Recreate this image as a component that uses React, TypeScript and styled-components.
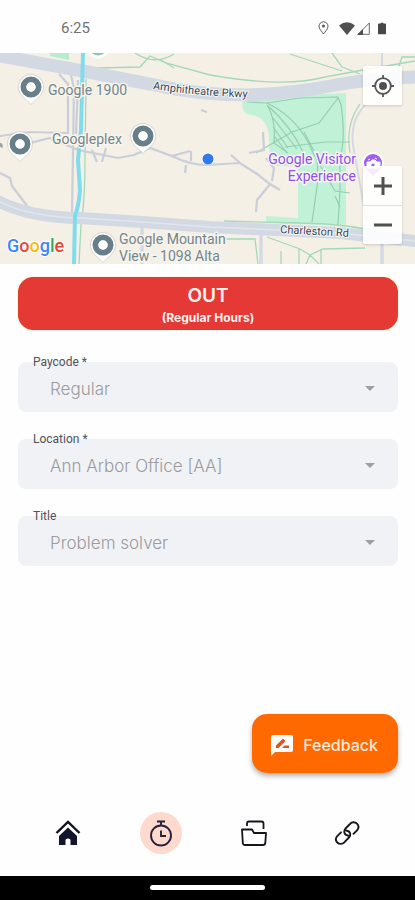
import React from "react";
import styled, { createGlobalStyle } from "styled-components";

const GlobalStyle = createGlobalStyle`
  * { box-sizing: border-box; }
  body { margin: 0; background: #fefefe; font-family: Inter, Roboto, sans-serif; }
  button, select { font: inherit; border: 0; }
  button { cursor: pointer; }
`;

const Screen = styled.div`
  display: flex;
  flex-direction: column;
  min-height: 100vh;
`;

const StatusBar = styled.header`
  display: flex;
  align-items: center;
  justify-content: space-between;
  height: 53px;
  padding: 3px 29px 0 61px;
  font: 400 15px/20px Roboto, sans-serif;
  color: #727272;
`;

const StatusIcons = styled.div`
  display: flex;
  align-items: center;
`;

const StatusIcon = styled.svg<{ $gap: number }>`
  display: block;
  margin-left: ${(p) => p.$gap}px;
`;

const MapPanel = styled.section`
  position: relative;
  height: 211px;
  overflow: hidden;
`;

const MapDrawing = styled.svg`
  display: block;
  width: 100%;
  height: 100%;
  text { font-family: Roboto, sans-serif; }
`;

const MapControls = styled.div`
  position: absolute;
  inset: 0;
  display: flex;
  flex-direction: column;
  align-items: flex-end;
  justify-content: space-between;
  padding: 13px 13px 20px;
  pointer-events: none;
`;

const ControlGroup = styled.div`
  display: flex;
  flex-direction: column;
  background: rgba(255, 255, 255, 0.88);
  box-shadow: 0 1px 3px rgba(0, 0, 0, 0.16);
  border-radius: 2px;
  pointer-events: auto;
`;

const MapButton = styled.button`
  display: grid;
  place-items: center;
  width: 39px;
  height: 39px;
  padding: 0;
  background: transparent;
  & + & { border-top: 1px solid #dedede; }
`;

const Main = styled.main`
  display: flex;
  flex: 1;
  flex-direction: column;
  padding: 13px 17px 39px 18px;
`;

const PunchButton = styled.button`
  display: flex;
  flex-direction: column;
  align-items: center;
  justify-content: center;
  height: 53px;
  padding: 2px 0 0;
  border: 1px solid #e2401c;
  border-radius: 15px;
  background: #e53935;
  color: #fff2f0;
  box-shadow: 0 0 1px #f5a05c;
`;

const PunchTitle = styled.span`
  font-size: 19px;
  line-height: 26px;
  font-weight: 600;
`;

const PunchNote = styled.span`
  font-size: 12px;
  line-height: 18px;
  font-weight: 700;
`;

const Form = styled.form`
  display: flex;
  flex-direction: column;
  gap: 27px;
  margin-top: 32px;
`;

const Field = styled.div`
  position: relative;
  display: flex;
`;

const FieldLabel = styled.label`
  position: absolute;
  top: -8px;
  left: 15px;
  font: 400 12px/16px Roboto, sans-serif;
  color: #505256;
`;

const FieldSelect = styled.select`
  flex: 1;
  min-width: 0;
  height: 50px;
  padding: 3px 48px 0 32px;
  border-radius: 8px;
  background: #f0f2f5;
  color: #9b9b9d;
  font-size: 17px;
  font-weight: 300;
  appearance: none;
`;

const Caret = styled.svg`
  position: absolute;
  top: 24px;
  right: 23px;
  pointer-events: none;
`;

const FeedbackButton = styled.button`
  display: flex;
  align-items: center;
  align-self: flex-end;
  gap: 9px;
  height: 59px;
  margin-top: auto;
  padding: 2px 20px 0 18px;
  border-radius: 15px;
  background: #ff6900;
  color: #ffeadc;
  font-size: 16px;
  font-weight: 500;
  box-shadow: 0 3px 5px rgba(0, 0, 0, 0.3);
`;

const NavBar = styled.nav`
  display: flex;
  padding: 0 21px 22px;
`;

const NavItem = styled.a`
  display: flex;
  flex: 1;
  justify-content: center;
`;

const NavIcon = styled.span<{ $active?: boolean }>`
  display: grid;
  place-items: center;
  width: 42px;
  height: 42px;
  border-radius: 50%;
  background: ${(p) => (p.$active ? "#fdd9ce" : "transparent")};
`;

const GestureBar = styled.footer`
  display: flex;
  justify-content: center;
  height: 24px;
  padding-top: 9px;
  background: #000;
`;

const GestureHandle = styled.span`
  width: 115px;
  height: 5px;
  border-radius: 3px;
  background: #fff;
`;

const PlacePin = ({ x, y }: { x: number; y: number }) => (
  <g transform={`translate(${x} ${y})`}>
    <path d="M0 18 C-4 13 -13 9 -13 0 A13 13 0 0 1 13 0 C13 9 4 13 0 18Z" fill="#b9bec0" opacity=".5" />
    <path d="M0 17 C-3 13 -12 9 -12 0 A12 12 0 0 1 12 0 C12 9 3 13 0 17Z" fill="#fff" />
    <circle r="7.5" fill="none" stroke="#687f8a" strokeWidth="6" />
    <circle r="4.7" fill="#fff" />
  </g>
);

const CampusMap = () => (
  <MapDrawing viewBox="0 53 415 211" preserveAspectRatio="xMidYMid slice" role="img" aria-label="Map of the area around Googleplex">
    <rect x="-400" y="53" width="1200" height="211" fill="#f5f0e5" />
    <path d="M50 53h19v7l-19-4z" fill="#b8ecd0" />
    <path d="M243 98 L346 93 V226 L266 223 V216 L298 218 V166 H270 L269 137 C268 122 260 115 250 115 C242 113 241 104 243 98Z" fill="#c1f1d6" />

    <g fill="none" stroke="#a3d8bb" strokeWidth="1.3">
      <path d="M86 79 L85 160 Q85 200 81 225 L79 264" />
      <path d="M93 79 L98 68 L140 67 L150 56 L166 63 L210 75 Q285 88 325 77 L363 70 L415 61" />
      <path d="M135 53 Q155 66 174 54 M161 60 L174 68 M332 53 L342 67 L360 74 M290 54 L342 71 M398 69 L402 57 H415" />
      <path d="M224 221 L300 223 Q350 223 402 237 M225 239 H255 L258 264 M267 237 L300 249 L310 255 L323 249 L365 248 M306 264 L310 255 L319 264 M281 251 V264 M299 249 V264 M321 249 V264" />
    </g>
    <g fill="none" stroke="#94cfb0" strokeWidth="1.2">
      <path d="M247 102 L267 103 L300 98 L338 97 L341 105 Q346 135 340 160 L340 190 L338 225" />
      <path d="M267 103 Q300 119 313 153 L335 191 L350 193 M267 105 Q291 126 303 152 M267 105 Q276 119 274 143 L288 153 M273 118 L297 149 M273 127 L288 148 M275 137 L287 153" />
      <path d="M338 98 L319 123 L292 132 L256 153 M285 147 L325 142 H350 M317 154 L318 180 L312 222 M335 196 L340 207 M304 132 L314 151" />
    </g>

    <g fill="none" stroke="#c9ced9" strokeWidth="2.2">
      <path d="M59 74 L68 84 V134 M71 75 L74 88 L72 212 M78 80 L76 134 M0 136 L29 132 L68 133 M26 144 L50 138 L78 150 L118 158 L134 155 L150 148 L172 156 L190 151 M92 150 L97 162 M106 148 L102 162" />
      <path d="M0 173 L10 178 L12 186 L28 207 M172 156 Q190 165 206 165 L240 163 L257 174 L270 184 L280 190 M240 163 L231 155 M271 183 L257 200 L256 212 M272 181 L274 168 L266 158 M191 151 V161 M249 153 L264 150 L263 132 M201 110 L207 112 M186 165 L185 173" />
    </g>
    <g fill="none" stroke="#d4d9e3" strokeWidth="3.5">
      <path d="M142 219 V264 M261 235 V264 M382 243 V264" />
      <path d="M382 53 V75 M366 104 Q350 120 353 145 L366 218" strokeWidth="2" />
      <path d="M360 104 Q345 125 350 153" stroke="#acd9c0" strokeWidth="1.3" />
    </g>
    <path d="M-100 32 L0 56 L83 71 L150 84 Q195 95 248 95 Q295 93 330 86 Q365 79 415 77 L520 72" fill="none" stroke="#d2d9e3" strokeWidth="13" />
    <path d="M-100 170 L0 202 Q30 217 80 218 L142 222 L210 227 L340 233 L415 241 L520 250" fill="none" stroke="#d2d9e3" strokeWidth="12" />
    <path d="M-100 170 L0 202 Q30 217 80 218 L142 222 L210 227 L340 233 L415 241" fill="none" stroke="#e2e6ec" strokeWidth="1.5" />
    <path d="M83 53 L82 90 L81 130 L78 160 L80 190 Q79 205 75 216 L74 264" fill="none" stroke="#80dcec" strokeWidth="4" />

    <PlacePin x={31} y={87} />
    <PlacePin x={20} y={144} />
    <PlacePin x={143} y={136} />
    <PlacePin x={103} y={245} />
    <path d="M89 53 Q98 61 107 53" fill="#86c8b0" stroke="#fff" strokeWidth="3" />
    <path d="M-3 144 a3 3 0 0 1 5 4" fill="#98a4a8" />

    <g fill="#73858e" stroke="#f8f4eb" strokeWidth="3" paintOrder="stroke" fontSize="14">
      <text x="48" y="95">Google 1900</text>
      <text x="52" y="144">Googleplex</text>
      <text x="119" y="244">Google Mountain</text>
      <text x="119" y="261">View - 1098 Alta</text>
    </g>
    <g fill="#9251e2" stroke="#f5f4f5" strokeWidth="3" paintOrder="stroke" fontSize="14" textAnchor="end">
      <text x="356" y="164">Google Visitor</text>
      <text x="356" y="181">Experience</text>
    </g>
    <path id="amphitheatre" d="M153 89 Q196 96 260 98" fill="none" />
    <path id="charleston" d="M280 233 L370 238" fill="none" />
    <g fill="#3d474f" stroke="#f4f5f6" strokeWidth="2" paintOrder="stroke" fontSize="11">
      <text><textPath href="#amphitheatre">Amphitheatre Pkwy</textPath></text>
      <text><textPath href="#charleston">Charleston Rd</textPath></text>
    </g>
    <path d="M373 178 C371 174 363 171 363 163 A10 10 0 0 1 383 163 C383 171 375 174 373 178Z" fill="#a05df0" stroke="#fff" strokeWidth="2" />
    <path d="M367 168 v-6 h3 l2-2 h3 l2 2 h3 v6z M368 160 l2-1 M375 158 l2 1" fill="#fff" stroke="#fff" />
    <circle cx="373" cy="165" r="1.6" fill="#a05df0" />
    <circle cx="208" cy="159" r="6.5" fill="#fff" opacity=".7" />
    <circle cx="208" cy="159" r="5.5" fill="#3279ed" />
    <text x="7" y="252" fontSize="18" fontWeight="500" stroke="#fff" strokeWidth="2" paintOrder="stroke">
      <tspan fill="#4285f4">G</tspan><tspan fill="#ea4335">o</tspan><tspan fill="#fbbc05">o</tspan><tspan fill="#4285f4">g</tspan><tspan fill="#34a853">l</tspan><tspan fill="#ea4335">e</tspan>
    </text>
  </MapDrawing>
);

const fields = [
  { id: "paycode", label: "Paycode *", value: "Regular" },
  { id: "location", label: "Location *", value: "Ann Arbor Office [AA]" },
  { id: "title", label: "Title", value: "Problem solver" },
];

const HomeIcon = () => (
  <svg width="26" height="26" viewBox="0 0 26 26" fill="none">
    <path d="M1.5 13 L13 2 L24.5 13" stroke="#111420" strokeWidth="2.4" />
    <path d="M13 7.500 L22 16 V25 H15.500 V20 Q15.500 18.500 13 18.500 Q10.500 18.500 10.500 20 V25 H4 V16Z" fill="#11152b" />
  </svg>
);

const TimerIcon = () => (
  <svg width="26" height="28" viewBox="0 0 26 28" fill="none" stroke="#25233f" strokeWidth="1.900">
    <circle cx="13" cy="16.500" r="10" />
    <path d="M13 11.500 V17 H18 M9 2.500 H17 M13 2.500 V6" />
  </svg>
);

const FolderIcon = () => (
  <svg width="28" height="28" viewBox="0 0 28 28" fill="none" stroke="#15151a" strokeWidth="1.800" strokeLinejoin="round">
    <path d="M2 10.500 H12 L14 14 H26 L25.300 24 Q25 26 23 26 H5 Q3 26 2.800 24Z" />
    <path d="M7 7 V4.500 Q7 2.500 9 2.500 H21.500 Q23.500 2.500 23.500 4.500 V10" />
  </svg>
);

const LinkIcon = () => (
  <svg width="26" height="26" viewBox="0 0 26 26" fill="none" stroke="#17171b" strokeWidth="1.900" strokeLinecap="round">
    <path d="M14.500 15.800 C10 15 9 11 12 8 L16 4 C18 1.800 21 1.800 23 3.700 C25 5.800 24.800 8.300 23 10.300 L19.500 13.800" />
    <path d="M12 10.500 C16.500 11 17.500 15 14.500 18 L10.500 22.200 C8.300 24.300 5.300 24.300 3.300 22.500 C1.500 20.500 1.500 17.800 3.500 15.800 L7 12.300" />
  </svg>
);

const navItems = [
  { name: "Home", icon: <HomeIcon /> },
  { name: "Time clock", icon: <TimerIcon />, active: true },
  { name: "Files", icon: <FolderIcon /> },
  { name: "Links", icon: <LinkIcon /> },
];

export default function App() {
  return (
    <>
      <GlobalStyle />
      <Screen>
        <StatusBar>
          <time>6:25</time>
          <StatusIcons>
            <StatusIcon $gap={0} width="11" height="14" viewBox="0 0 11 14" fill="none" stroke="#595959">
              <path d="M5.500 13 C4.500 11 1 8.500 1 5.300 A4.500 4.500 0 0 1 10 5.300 C10 8.500 6.500 11 5.500 13Z" />
              <circle cx="5.500" cy="5" r="1.500" fill="#595959" stroke="none" />
            </StatusIcon>
            <StatusIcon $gap={10} width="16" height="13" viewBox="0 0 16 13" fill="#505050">
              <path d="M0 3.500 Q8 -3 16 3.500 L8 13Z" />
            </StatusIcon>
            <StatusIcon $gap={2} width="13" height="13" viewBox="0 0 13 13">
              <path d="M1 12.300 L12.300 1 V12.300Z" fill="none" stroke="#6a6a6a" />
              <path d="M0 13 L6 7 V13Z" fill="#505050" />
            </StatusIcon>
            <StatusIcon $gap={8} width="8" height="13" viewBox="0 0 9 13" fill="#484848">
              <path d="M3 0h3v1h2q1 0 1 1v10q0 1-1 1H1q-1 0-1-1V2q0-1 1-1h2z" />
            </StatusIcon>
          </StatusIcons>
        </StatusBar>

        <MapPanel>
          <CampusMap />
          <MapControls>
            <ControlGroup>
              <MapButton aria-label="My location">
                <svg width="24" height="24" viewBox="0 0 24 24" fill="none" stroke="#555" strokeWidth="1.800">
                  <circle cx="12" cy="12" r="7.800" />
                  <circle cx="12" cy="12" r="4" fill="#505050" stroke="none" />
                  <path d="M12 1v4 M12 19v4 M1 12h4 M19 12h4" />
                </svg>
              </MapButton>
            </ControlGroup>
            <ControlGroup>
              <MapButton aria-label="Zoom in">
                <svg width="18" height="18" viewBox="0 0 18 18" stroke="#505050" strokeWidth="3"><path d="M0 9h18M9 0v18" /></svg>
              </MapButton>
              <MapButton aria-label="Zoom out">
                <svg width="18" height="18" viewBox="0 0 18 18" stroke="#505050" strokeWidth="3"><path d="M0 9h18" /></svg>
              </MapButton>
            </ControlGroup>
          </MapControls>
        </MapPanel>

        <Main>
          <PunchButton>
            <PunchTitle>OUT</PunchTitle>
            <PunchNote>(Regular Hours)</PunchNote>
          </PunchButton>
          <Form>
            {fields.map((f) => (
              <Field key={f.id}>
                <FieldSelect id={f.id} defaultValue={f.value}>
                  <option>{f.value}</option>
                </FieldSelect>
                <FieldLabel htmlFor={f.id}>{f.label}</FieldLabel>
                <Caret width="10" height="5" viewBox="0 0 10 5" fill="#9d9fa2"><path d="M0 0h10L5 5z" /></Caret>
              </Field>
            ))}
          </Form>
          <FeedbackButton>
            <svg width="24" height="22" viewBox="0 0 24 22">
              <path d="M3 1h18q2 0 2 2v13q0 2-2 2H5l-4 4V3q0-2 2-2z" fill="#fff" />
              <path d="M6 14v-2.500l7-7L15.500 7l-7 7zM12 14l2.500-2.500H19V14z" fill="#e25318" />
            </svg>
            Feedback
          </FeedbackButton>
        </Main>

        <NavBar>
          {navItems.map((item) => (
            <NavItem key={item.name} href="#" aria-label={item.name} aria-current={item.active ? "page" : undefined}>
              <NavIcon $active={item.active}>{item.icon}</NavIcon>
            </NavItem>
          ))}
        </NavBar>
        <GestureBar><GestureHandle /></GestureBar>
      </Screen>
    </>
  );
}
